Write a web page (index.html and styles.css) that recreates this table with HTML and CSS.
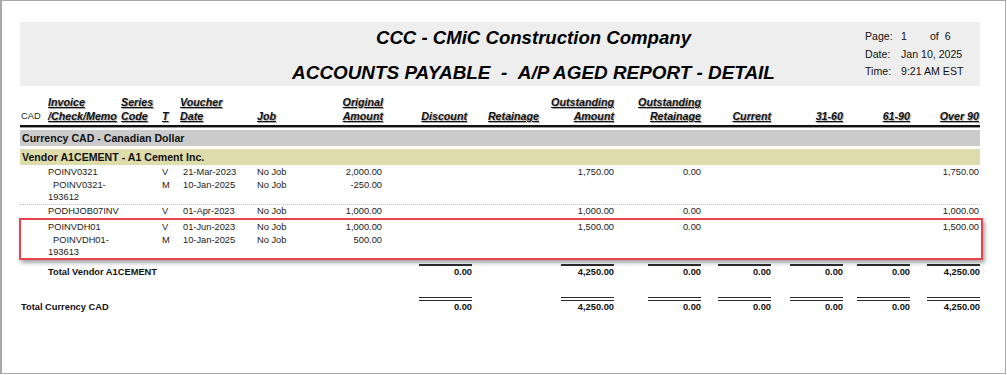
FILE: index.html
```html
<!DOCTYPE html>
<html>
<head>
<meta charset="utf-8">
<link rel="stylesheet" href="styles.css">
</head>
<body>
<div class="frame">
  <div class="report">
    <div class="band">
      <div class="title">
        <div class="t1">CCC - CMiC Construction Company</div>
        <div class="t2">ACCOUNTS PAYABLE &nbsp;- &nbsp;A/P AGED REPORT - DETAIL</div>
      </div>
      <div class="info">
        <div class="info-row"><span>Page:</span><span>1<span class="of">of&nbsp;&nbsp;6</span></span></div>
        <div class="info-row"><span>Date:</span><span>Jan 10, 2025</span></div>
        <div class="info-row"><span>Time:</span><span>9:21 AM EST</span></div>
      </div>
    </div>

    <div class="grid head">
      <div class="cad">CAD</div>
      <div class="h p1">Invoice<br>/Check/Memo</div>
      <div class="h p1">Series<br>Code</div>
      <div class="h p1">T</div>
      <div class="h p1">Voucher<br>Date</div>
      <div class="h">Job</div>
      <div class="h r">Original<br>Amount</div>
      <div class="h r pr5">Discount</div>
      <div class="h r pr1">Retainage</div>
      <div class="h r">Outstanding<br>Amount</div>
      <div class="h r">Outstanding<br>Retainage</div>
      <div class="h r">Current</div>
      <div class="h r">31-60</div>
      <div class="h r">61-90</div>
      <div class="h r pr1">Over 90</div>
    </div>

    <div class="cur">Currency CAD - Canadian Dollar</div>
    <div class="ven">Vendor A1CEMENT - A1 Cement Inc.</div>

    <div class="grp first">
      <div class="grid row v">
        <div></div><div class="p1 nw">POINV0321</div><div></div><div class="p1">V</div><div class="pd">21-Mar-2023</div><div>No Job</div>
        <div class="r pr1">2,000.00</div><div></div><div></div><div class="r">1,750.00</div><div class="r">0.00</div><div></div><div></div><div></div><div class="r pr1">1,750.00</div>
      </div>
      <div class="grid row m">
        <div></div><div class="p1 ind">POINV0321-193612</div><div></div><div class="p1">M</div><div class="pd">10-Jan-2025</div><div>No Job</div>
        <div class="r pr1">-250.00</div><div></div><div></div><div></div><div></div><div></div><div></div><div></div><div></div>
      </div>
    </div>

    <div class="grp dotted">
      <div class="grid row m">
        <div></div><div class="p1 nw">PODHJOB07INV</div><div></div><div class="p1">V</div><div class="pd">01-Apr-2023</div><div>No Job</div>
        <div class="r pr1">1,000.00</div><div></div><div></div><div class="r">1,000.00</div><div class="r">0.00</div><div></div><div></div><div></div><div class="r pr1">1,000.00</div>
      </div>
    </div>

    <div class="hl">
      <div class="grid row v">
        <div></div><div class="p1 nw">POINVDH01</div><div></div><div class="p1">V</div><div class="pd">01-Jun-2023</div><div>No Job</div>
        <div class="r pr1">1,000.00</div><div></div><div></div><div class="r">1,500.00</div><div class="r">0.00</div><div></div><div></div><div></div><div class="r pr1">1,500.00</div>
      </div>
      <div class="grid row m">
        <div></div><div class="p1 ind">POINVDH01-193613</div><div></div><div class="p1">M</div><div class="pd">10-Jan-2025</div><div>No Job</div>
        <div class="r pr1">500.00</div><div></div><div></div><div></div><div></div><div></div><div></div><div></div><div></div>
      </div>
    </div>

    <div class="grid total t-vendor">
      <div></div>
      <div class="label p1">Total Vendor A1CEMENT</div>
      <div class="r"><span class="ul">0.00</span></div>
      <div></div>
      <div class="r"><span class="ul">4,250.00</span></div>
      <div class="r"><span class="ul">0.00</span></div>
      <div class="r"><span class="ul">0.00</span></div>
      <div class="r"><span class="ul">0.00</span></div>
      <div class="r"><span class="ul">0.00</span></div>
      <div class="r"><span class="ul">4,250.00</span></div>
    </div>

    <div class="grid total t-cur">
      <div class="label p1 wide">Total Currency CAD</div>
      <div class="r"><span class="ul2">0.00</span></div>
      <div></div>
      <div class="r"><span class="ul2">4,250.00</span></div>
      <div class="r"><span class="ul2">0.00</span></div>
      <div class="r"><span class="ul2">0.00</span></div>
      <div class="r"><span class="ul2">0.00</span></div>
      <div class="r"><span class="ul2">0.00</span></div>
      <div class="r"><span class="ul2">4,250.00</span></div>
    </div>
  </div>
</div>
</body>
</html>
```
FILE: styles.css
```css
* { box-sizing: border-box; }
html, body { margin: 0; padding: 0; background: #fff; }
body { font-family: "Liberation Sans", Arial, sans-serif; color: #1e1e1e; }

.frame {
  width: 1006px;
  height: 374px;
  border: 1px solid #a8a8a8;
  border-left-width: 2px;
  padding: 21px 0 0 18px;
  overflow: hidden;
}
.report { width: 960px; }

/* header band */
.band { display: flex; height: 64px; background: #eeeeee; }
.title {
  flex: 1;
  padding: 4px 0 0 182px;
  text-align: center;
  font-weight: bold;
  font-style: italic;
  font-size: 18.6px;
  color: #000;
  white-space: nowrap;
}
.t1 { line-height: 24px; }
.t2 { line-height: 26px; margin-top: 10px; font-size: 18.9px; }
.info { width: 115px; padding-top: 6px; font-size: 10.6px; line-height: 17.5px; color: #111; }
.info-row { display: grid; grid-template-columns: 36px 1fr; white-space: nowrap; }
.of { margin-left: 23px; }

/* column grid */
.grid {
  display: grid;
  grid-template-columns: 27px 73px 41px 18px 78px 43px 83px 89px 68px 74px 87px 70px 72px 67px 70px;
}
.head {
  margin-top: 9px;
  padding-bottom: 2px;
  border-bottom: 2px solid #111;
  box-shadow: 0 1px 0 #9a9a9a;
  align-items: end;
  font-size: 10.7px;
  line-height: 14px;
}
.head .h {
  font-weight: bold;
  font-style: italic;
  text-decoration: underline;
  text-shadow: 1px 1px 1px rgba(0, 0, 0, 0.35);
  color: #111;
  white-space: nowrap;
}
.cad { font-size: 9.3px; padding-left: 1px; line-height: 14px; }

.r { text-align: right; }
.p1 { padding-left: 1px; }
.pd { padding-left: 4px; }
.pr1 { padding-right: 1px; }
.pr5 { padding-right: 5px; }
.nw { white-space: nowrap; }
.ind { text-indent: 5px; }

/* group bands */
.cur, .ven {
  margin-top: 3px;
  height: 16px;
  line-height: 16px;
  padding-left: 2px;
  font-weight: bold;
  font-size: 10.6px;
  color: #111;
}
.cur { background: #cbcbcb; }
.ven { background: #dedcab; }

/* detail rows */
.row { font-size: 9.3px; color: #222; }
.row.v { line-height: 13px; }
.row.m { line-height: 12px; }
.grp.first { padding: 1px 0; }
.grp.dotted { border-top: 1px dotted #bcbcbc; }
.hl {
  margin: 1px -3px 0 -1px;
  padding-top: 1px;
  border: 2px solid #e8434b;
  box-shadow: 2px 3px 4px rgba(0, 0, 0, 0.35);
}
.hl .grid { margin-left: -1px; }

/* totals */
.total { font-size: 9.3px; line-height: 12px; font-weight: bold; color: #111; }
.t-vendor { margin-top: 4px; }
.t-vendor .label { grid-column: 2 / 8; padding-top: 2px; }
.t-cur { margin-top: 19px; }
.t-cur .label { grid-column: 1 / 8; padding-top: 4px; }
.ul, .ul2 { display: block; width: 53px; margin-left: auto; text-align: right; }
.ul { border-top: 2px solid #2a2a2a; }
.ul2 { border-top: 4px double #2a2a2a; }
```
